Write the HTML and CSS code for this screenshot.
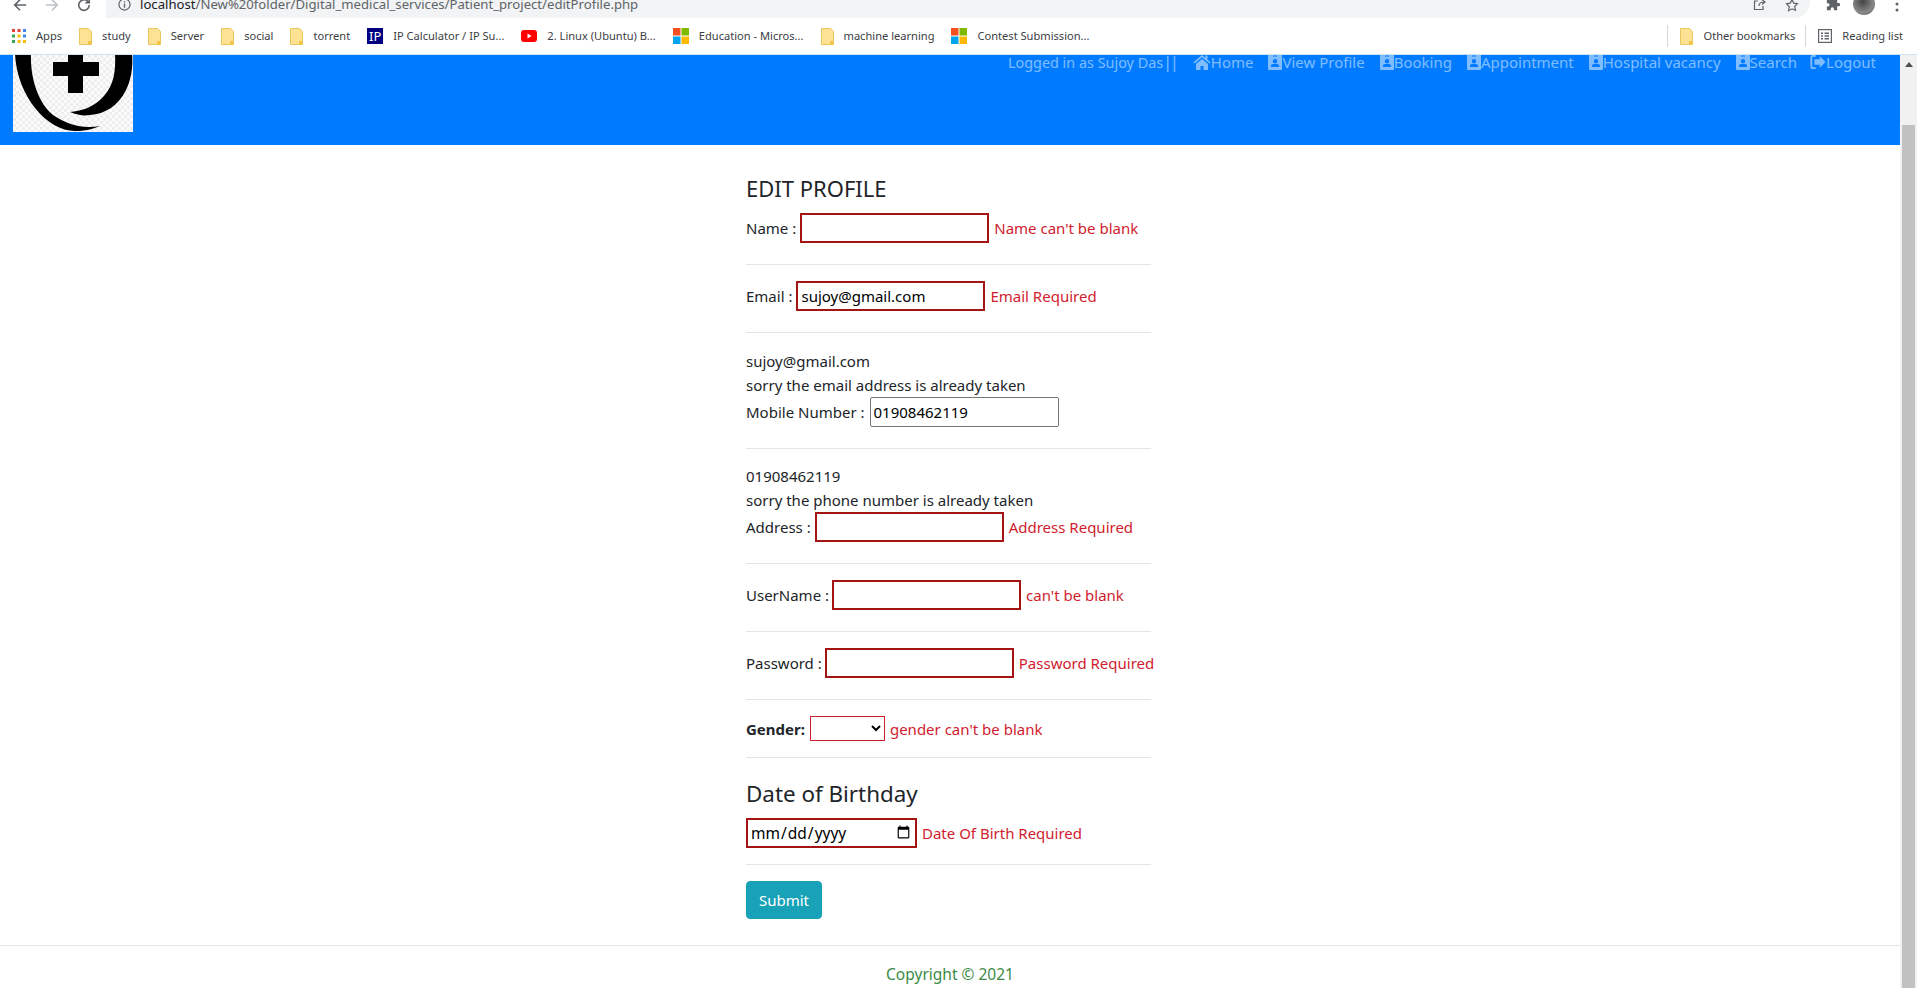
FILE: index.html
```html
<!DOCTYPE html>
<html lang="en">
<head>
<meta charset="utf-8">
<title>Edit Profile</title>
<link rel="stylesheet" href="styles.css">
</head>
<body>
<svg class="defs" width="0" height="0" aria-hidden="true">
  <defs>
    <symbol id="badge" viewBox="0 0 14 16"><path fill-rule="evenodd" d="M1 0h12a1 1 0 0 1 1 1v14a1 1 0 0 1-1 1H1a1 1 0 0 1-1-1V1a1 1 0 0 1 1-1zM5 1.500v1h4v-1zM7 5a2.200 2.200 0 1 0 0 4.400A2.200 2.200 0 0 0 7 5zM3 13h8v-1.200c0-1-.9-1.800-2-1.800H5c-1.100 0-2 .8-2 1.800z"/></symbol>
    <symbol id="folder" viewBox="0 0 13 17"><path d="M.5.5h9l3 3v13H.5z" fill="#fde293" stroke="#e8c75f"/><path d="M9 13h3.500v3.500H9z" fill="#f4c542"/></symbol>
    <symbol id="ms" viewBox="0 0 16 16"><path fill="#f25022" d="M0 0h7.500v7.500H0z"/><path fill="#7fba00" d="M8.500 0H16v7.500H8.500z"/><path fill="#00a4ef" d="M0 8.500h7.500V16H0z"/><path fill="#ffb900" d="M8.500 8.500H16V16H8.500z"/></symbol>
  </defs>
</svg>
<div class="window">
  <div class="toolbar">
    <svg class="tool-icon" viewBox="0 0 16 16"><path d="M15 8H2M8 2 2 8l6 6" fill="none" stroke="#5f6368" stroke-width="1.900"/></svg>
    <svg class="tool-icon" viewBox="0 0 16 16"><path d="M1 8h13M8 2l6 6-6 6" fill="none" stroke="#bdc1c6" stroke-width="1.900"/></svg>
    <svg class="tool-icon" viewBox="0 0 16 16"><path d="M14 8a6 6 0 1 1-1.800-4.200L14 5.500M14 1v4.500H9.500" fill="none" stroke="#5f6368" stroke-width="1.800"/></svg>
    <div class="omnibox">
      <svg class="info" viewBox="0 0 14 14"><circle cx="7" cy="7" r="6" fill="none" stroke="#5f6368" stroke-width="1.300"/><path d="M6.300 6h1.400v4.500H6.300zM6.300 3.500h1.400v1.400H6.300z" fill="#5f6368"/></svg>
      <span class="url"><span class="url-host">localhost</span>/New%20folder/Digital_medical_services/Patient_project/editProfile.php</span>
      <span class="omni-end">
        <svg class="small-icon" viewBox="0 0 14 14"><path d="M10 8v3.500H1.500V3H5M6 8c0-3 2-4 5-4M9 1.500 12 4 9 6.500" fill="none" stroke="#5f6368" stroke-width="1.200"/></svg>
        <svg class="small-icon" viewBox="0 0 14 14"><path d="m7 1.500 1.700 3.600 3.800.5-2.800 2.700.7 3.900L7 10.800l-3.400 1.900.7-3.900L1.500 5.600l3.800-.5z" fill="none" stroke="#5f6368" stroke-width="1.200"/></svg>
      </span>
    </div>
    <svg class="puzzle" viewBox="0 0 16 16"><path fill="#5f6368" d="M6 1.500a1.700 1.700 0 0 1 3.400 0V3H13v3.500h1.500a1.700 1.700 0 0 1 0 3.400H13V14H9.500v-1.500a1.700 1.700 0 0 0-3.400 0V14H2v-4h1.200a1.700 1.700 0 0 0 0-3.400H2V3h4z"/></svg>
    <span class="avatar"></span>
    <svg class="dots" viewBox="0 0 4 16"><circle cx="2" cy="2" r="1.500"/><circle cx="2" cy="8" r="1.500"/><circle cx="2" cy="14" r="1.500"/></svg>
  </div>
  <div class="bookmarks">
    <span class="bm bm-apps"><svg class="apps" viewBox="0 0 14 14"><g fill="#ea4335"><path d="M0 0h3v3H0z"/><path d="M5.500 0h3v3h-3z"/></g><path fill="#4285f4" d="M11 0h3v3h-3z"/><path fill="#34a853" d="M0 5.500h3v3H0z"/><path fill="#fbbc04" d="M5.500 5.500h3v3h-3z"/><path fill="#4285f4" d="M11 5.500h3v3h-3z"/><path fill="#34a853" d="M0 11h3v3H0z"/><path fill="#fbbc04" d="M5.500 11h3v3h-3zM11 11h3v3h-3z"/></svg>Apps</span>
    <span class="bm"><svg class="folder"><use href="#folder"/></svg>study</span>
    <span class="bm"><svg class="folder"><use href="#folder"/></svg>Server</span>
    <span class="bm"><svg class="folder"><use href="#folder"/></svg>social</span>
    <span class="bm"><svg class="folder"><use href="#folder"/></svg>torrent</span>
    <span class="bm"><span class="ip">IP</span>IP Calculator / IP Su...</span>
    <span class="bm"><svg class="yt" viewBox="0 0 16 12"><rect width="16" height="12" rx="3" fill="#f00"/><path d="m6.500 3.500 4 2.500-4 2.500z" fill="#fff"/></svg>2. Linux (Ubuntu) B...</span>
    <span class="bm"><svg class="ms"><use href="#ms"/></svg>Education - Micros...</span>
    <span class="bm"><svg class="folder"><use href="#folder"/></svg>machine learning</span>
    <span class="bm"><svg class="ms"><use href="#ms"/></svg>Contest Submission...</span>
    <span class="bm-right">
      <span class="bm bm-other"><svg class="folder"><use href="#folder"/></svg>Other bookmarks</span>
      <span class="bm bm-read"><svg class="read" viewBox="0 0 14 14"><rect x=".6" y=".6" width="12.800" height="12.800" fill="none" stroke="#5f6368" stroke-width="1.200"/><path d="M3 3.500h2v1.500H3zM6.500 3.500H11V5H6.500zM3 6.300h2v1.500H3zM6.500 6.300H11v1.500H6.500zM3 9.100h2v1.500H3zM6.500 9.100H11v1.500H6.500z" fill="#5f6368"/></svg>Reading list</span>
    </span>
  </div>
  <div class="viewport">
    <div class="page">
      <header class="site-header">
        <svg class="logo" viewBox="0 1 120 77" aria-label="logo">
          <path d="M2 0C4 42 34 77 62 77 72 77 80 75 87 72 70 75 55 71 40 61 26 50 17 25 18 0Z"/>
          <path d="M102 0C103 20 100 34 87 46 78 54 68 57 57 58 64 61 71 62 77 61 92 60 105 52 113 36 119 24 120 10 119 0Z"/>
          <path d="M55 0H70V8H86V22H70V39H55V22H40V8H55Z"/>
        </svg>
        <nav class="nav">
          <span class="nav-user">Logged in as Sujoy Das<span class="bars">||</span></span>
          <a class="nav-link" href="#"><svg class="nav-icon home" viewBox="0 0 18 16"><path d="M9 1 .5 8.300l1 1.200L9 3.200l7.500 6.300 1-1.200L14.500 5.800V1.500h-2.200v2.400zM3 10v6h4.500v-4h3v4H15v-6L9 5z"/></svg>Home</a>
          <a class="nav-link" href="#"><svg class="nav-icon"><use href="#badge"/></svg>View Profile</a>
          <a class="nav-link" href="#"><svg class="nav-icon"><use href="#badge"/></svg>Booking</a>
          <a class="nav-link" href="#"><svg class="nav-icon"><use href="#badge"/></svg>Appointment</a>
          <a class="nav-link" href="#"><svg class="nav-icon"><use href="#badge"/></svg>Hospital vacancy</a>
          <a class="nav-link" href="#"><svg class="nav-icon"><use href="#badge"/></svg>Search</a>
          <a class="nav-link nav-link-last" href="#"><svg class="nav-icon logout" viewBox="0 0 18 16"><path d="M6.500 2H3.500A1 1 0 0 0 2.500 3v10a1 1 0 0 0 1 1h3v2h-3A3 3 0 0 1 .5 13V3a3 3 0 0 1 3-3h3zM11 1.500 17.500 8 11 14.500V11H5V5h6z"/></svg>Logout</a>
        </nav>
      </header>
      <main class="content">
        <form class="profile-form">
          <h4 class="heading">EDIT PROFILE</h4>
          <div class="field"><label>Name :</label><input class="text-input invalid" type="text"><span class="error">Name can't be blank</span></div>
          <hr class="rule">
          <div class="field"><label>Email :</label><input class="text-input invalid" type="text" value="sujoy@gmail.com"><span class="error">Email Required</span></div>
          <hr class="rule">
          <div class="note">sujoy@gmail.com</div>
          <div class="note">sorry the email address is already taken</div>
          <div class="field"><label class="label-wide">Mobile Number :</label><input class="text-input" type="text" value="01908462119"></div>
          <hr class="rule">
          <div class="note note-tight">01908462119</div>
          <div class="note">sorry the phone number is already taken</div>
          <div class="field"><label>Address :</label><input class="text-input invalid" type="text"><span class="error">Address Required</span></div>
          <hr class="rule">
          <div class="field"><label class="label-tight">UserName :</label><input class="text-input invalid" type="text"><span class="error">can't be blank</span></div>
          <hr class="rule">
          <div class="field"><label class="label-tight">Password :</label><input class="text-input invalid" type="password"><span class="error">Password Required</span></div>
          <hr class="rule">
          <div class="field field-gender"><label class="strong">Gender:</label><select class="gender"><option></option><option>Male</option><option>Female</option></select><span class="error">gender can't be blank</span></div>
          <hr class="rule">
          <h4 class="heading heading-date">Date of Birthday</h4>
          <div class="field field-date"><input class="date-input" type="date"><span class="error">Date Of Birth Required</span></div>
          <hr class="rule">
          <button class="submit" type="button">Submit</button>
        </form>
      </main>
      <footer class="footer">Copyright © 2021</footer>
    </div>
    <div class="scrollbar">
      <span class="scroll-arrow"></span>
      <span class="scroll-thumb"></span>
    </div>
  </div>
</div>
</body>
</html>
```
FILE: styles.css
```css
* { box-sizing: border-box; }
html, body { margin: 0; height: 100%; overflow: hidden; }
body { font-family: "Noto Sans", "Open Sans", sans-serif; font-size: 15px; line-height: 24px; color: #212529; background: #fff; }
.defs { position: absolute; }
.window { height: 988px; display: flex; flex-direction: column; }

.toolbar { height: 18px; flex: none; display: flex; align-items: flex-start; overflow: hidden; background: #fff; padding-left: 13px; }
.tool-icon { width: 14px; height: 14px; margin: -2px 18px 0 0; flex: none; }
.omnibox { width: 1704px; height: 18px; margin-left: -3px; background: #f1f3f4; border-radius: 0 0 16px 0; display: flex; align-items: flex-start; padding-left: 12px; flex: none; }
.info { width: 13px; height: 13px; margin: -2px 0 0 0; flex: none; }
.url { font-size: 13.150px; line-height: 18px; margin: -5px 0 0 9px; color: #5f6368; white-space: nowrap; }
.url-host { color: #202124; }
.omni-end { margin-left: auto; padding-right: 11px; display: flex; gap: 18px; }
.small-icon { width: 14px; height: 14px; margin-top: -2px; }
.puzzle { width: 15px; height: 15px; margin: -3px 0 0 15px; flex: none; }
.avatar { width: 22px; height: 22px; border-radius: 50%; background: radial-gradient(circle at 45% 40%, #444, #888 60%, #555); margin: -7px 0 0 13px; flex: none; }
.dots { width: 4px; height: 16px; margin: -4px 0 0 20px; fill: #5f6368; flex: none; }

.bookmarks { height: 37px; flex: none; display: flex; align-items: center; background: #fff; padding: 0 14px 0 12px; border-bottom: 1px solid #cfe3f0; font-size: 11.100px; line-height: 16px; color: #3c4043; white-space: nowrap; gap: 17px; }
.bm { display: inline-flex; align-items: center; gap: 10px; }
.folder { width: 13px; height: 17px; flex: none; }
.apps { width: 14px; height: 14px; }
.ip { width: 16px; height: 16px; background: #000080; color: #fff; font-size: 13px; line-height: 16px; text-align: center; flex: none; }
.yt { width: 16px; height: 12px; flex: none; }
.ms { width: 16px; height: 16px; flex: none; }
.read { width: 14px; height: 14px; flex: none; }
.bm-right { margin-left: auto; display: flex; align-items: center; }
.bm-other { border-left: 1px solid #d5d5d5; padding-left: 12px; height: 22px; }
.bm-read { border-left: 1px solid #d5d5d5; margin-left: 10px; padding-left: 12px; height: 22px; }

.viewport { flex: 1; display: flex; min-height: 0; }
.page { flex: 1; min-width: 0; }
.site-header { height: 90px; background: #007bff; display: flex; justify-content: space-between; overflow: hidden; padding: 0 24px 0 13px; }
.logo { width: 120px; height: 77px; flex: none; background: repeating-conic-gradient(#eeeeee 0 25%, #fbfbfb 0 50%) 0 0 / 6px 6px; }
.nav { display: flex; margin-top: -5px; font-size: 15px; color: rgba(255, 255, 255, .5); white-space: nowrap; }
.nav-user { margin-right: 16px; font-size: 14.400px; }
.bars { letter-spacing: -2px; font-size: 16px; }
.nav-link { color: rgba(255, 255, 255, .5); text-decoration: none; margin-left: 15px; display: flex; align-items: flex-start; }
.nav-link:first-of-type { margin-left: 0; }
.nav-link-last { margin-left: 13px; }
.nav-icon { width: 14px; height: 16px; margin-top: 4px; fill: rgba(255, 255, 255, .5); flex: none; }
.home { width: 18px; }
.logout { width: 16px; }

.content { display: flex; justify-content: center; }
.profile-form { width: 405px; padding-top: 29px; margin-left: -3px; }
.heading { font-size: 22px; font-weight: 400; line-height: 29px; margin: 0 0 10px; }
.heading-date { margin: 21px 0 10px; font-size: 22.400px; }
.field { display: flex; align-items: center; gap: 4px; padding-bottom: 5px; white-space: nowrap; }
.field-gender, .field-date { padding-bottom: 0; }
.label-wide { margin-right: 1px; }
.label-tight { margin-right: -1px; }
.rule { border: 0; border-top: 1px solid rgba(0, 0, 0, .1); margin: 16px 0; }
.note { height: 24px; }
.note-tight { margin-top: -1px; }
.text-input { width: 189px; height: 30px; border: 1px solid #767676; border-radius: 2px; padding: 1px 3px; font: 15px "Noto Sans", sans-serif; color: #000; background: #fff; }
.invalid { border: 2px solid #a31515; border-radius: 0; }
.error { color: #d01c2e; margin-left: 1px; }
.strong { font-weight: 700; }
.gender { width: 75px; height: 25px; border: 1px solid #c8232c; background: #fff; border-radius: 0; margin-left: 1px; }
.date-input { width: 171px; height: 30px; border: 2px solid #a31515; padding: 1px 2px; font: 15.500px "Noto Sans", sans-serif; background: #fff; }
.submit { display: block; width: 76px; height: 38px; border: 1px solid #17a2b8; border-radius: 4px; background: #17a2b8; color: #fff; font: 15px "Noto Sans", sans-serif; padding: 0; }

.footer { margin-top: 26px; border-top: 1px solid rgba(0, 0, 0, .1); padding-top: 16px; text-align: center; color: #3b8b47; font-size: 15.500px; }

.scrollbar { width: 17px; flex: none; background: #f1f1f1; display: flex; flex-direction: column; align-items: center; }
.scroll-arrow { width: 0; height: 0; margin-top: 7px; border-left: 4px solid transparent; border-right: 4px solid transparent; border-bottom: 5px solid #505050; }
.scroll-thumb { width: 13px; flex: 1; margin-top: 58px; background: #c1c1c1; }
```
